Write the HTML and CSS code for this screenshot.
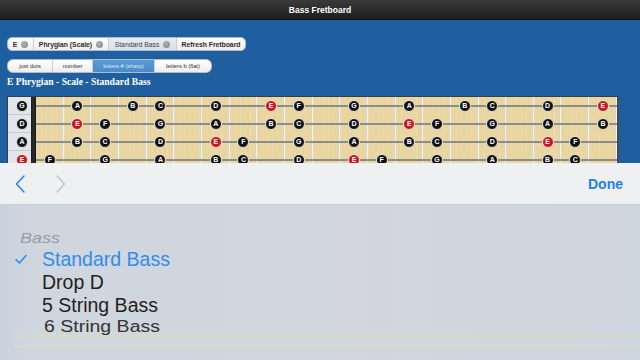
FILE: index.html
```html
<!DOCTYPE html>
<html>
<head>
<meta charset="utf-8">
<link rel="stylesheet" href="styles.css">
</head>
<body>
<header class="topbar">Bass Fretboard</header>
<main class="stage">
  <div class="seg seg-main">
    <span class="seg-item w-e">E<i class="knob"></i></span>
    <span class="seg-item w-ph">Phrygian (Scale)<i class="knob"></i></span>
    <span class="seg-item w-sb on">Standard Bass<i class="knob"></i></span>
    <span class="seg-item w-rf">Refresh Fretboard</span>
  </div>
  <div class="seg seg-mode">
    <span class="seg-item w-jd">just dots</span>
    <span class="seg-item w-nb">number</span>
    <span class="seg-item w-sh on">letters # (sharp)</span>
    <span class="seg-item w-fl">letters b (flat)</span>
  </div>
  <h1 class="title">E Phrygian - Scale - Standard Bass</h1>
  <div class="board">
    <div class="lbl"><b class="n">G</b></div><div class="nut"></div>
    <div class="f"></div><div class="f"><b class="n">A</b></div><div class="f"></div><div class="f"><b class="n">B</b></div><div class="f"><b class="n">C</b></div><div class="f"></div><div class="f"><b class="n">D</b></div><div class="f"></div><div class="f"><b class="n r">E</b></div><div class="f"><b class="n">F</b></div><div class="f"></div><div class="f"><b class="n">G</b></div><div class="f"></div><div class="f"><b class="n">A</b></div><div class="f"></div><div class="f"><b class="n">B</b></div><div class="f"><b class="n">C</b></div><div class="f"></div><div class="f"><b class="n">D</b></div><div class="f"></div><div class="f"><b class="n r">E</b></div>

    <div class="lbl"><b class="n">D</b></div><div class="nut"></div>
    <div class="f"></div><div class="f"><b class="n r">E</b></div><div class="f"><b class="n">F</b></div><div class="f"></div><div class="f"><b class="n">G</b></div><div class="f"></div><div class="f"><b class="n">A</b></div><div class="f"></div><div class="f"><b class="n">B</b></div><div class="f"><b class="n">C</b></div><div class="f"></div><div class="f"><b class="n">D</b></div><div class="f"></div><div class="f"><b class="n r">E</b></div><div class="f"><b class="n">F</b></div><div class="f"></div><div class="f"><b class="n">G</b></div><div class="f"></div><div class="f"><b class="n">A</b></div><div class="f"></div><div class="f"><b class="n">B</b></div>

    <div class="lbl"><b class="n">A</b></div><div class="nut"></div>
    <div class="f"></div><div class="f"><b class="n">B</b></div><div class="f"><b class="n">C</b></div><div class="f"></div><div class="f"><b class="n">D</b></div><div class="f"></div><div class="f"><b class="n r">E</b></div><div class="f"><b class="n">F</b></div><div class="f"></div><div class="f"><b class="n">G</b></div><div class="f"></div><div class="f"><b class="n">A</b></div><div class="f"></div><div class="f"><b class="n">B</b></div><div class="f"><b class="n">C</b></div><div class="f"></div><div class="f"><b class="n">D</b></div><div class="f"></div><div class="f"><b class="n r">E</b></div><div class="f"><b class="n">F</b></div><div class="f"></div>

    <div class="lbl"><b class="n r">E</b></div><div class="nut"></div>
    <div class="f"><b class="n">F</b></div><div class="f"></div><div class="f"><b class="n">G</b></div><div class="f"></div><div class="f"><b class="n">A</b></div><div class="f"></div><div class="f"><b class="n">B</b></div><div class="f"><b class="n">C</b></div><div class="f"></div><div class="f"><b class="n">D</b></div><div class="f"></div><div class="f"><b class="n r">E</b></div><div class="f"><b class="n">F</b></div><div class="f"></div><div class="f"><b class="n">G</b></div><div class="f"></div><div class="f"><b class="n">A</b></div><div class="f"></div><div class="f"><b class="n">B</b></div><div class="f"><b class="n">C</b></div><div class="f"></div>
  </div>
</main>
<section class="toolbar">
  <svg class="chev" width="10" height="18" viewBox="0 0 10 18"><polyline points="9,1 1.5,9 9,17" fill="none" stroke="#1f7ff0" stroke-width="1.4" stroke-linecap="round" stroke-linejoin="round"/></svg>
  <svg class="chev chev-next" width="10" height="18" viewBox="0 0 10 18"><polyline points="1,1 8.5,9 1,17" fill="none" stroke="#c2c5c9" stroke-width="1.4" stroke-linecap="round" stroke-linejoin="round"/></svg>
  <span class="done">Done</span>
</section>
<section class="picker">
  <div class="group">Bass</div>
  <div class="item sel"><svg class="check" width="12" height="10" viewBox="0 0 12 10"><polyline points="1,5.5 4.5,9 11,1.5" fill="none" stroke="#2f8cf0" stroke-width="1.6" stroke-linecap="round" stroke-linejoin="round"/></svg><span>Standard Bass</span></div>
  <div class="item drop">Drop D</div>
  <div class="item five">5 String Bass</div>
  <div class="item six">6 String Bass</div>
  <div class="band"></div>
</section>
</body>
</html>
```
FILE: styles.css
```css
html, body {
  margin: 0;
  padding: 0;
  width: 640px;
  height: 360px;
  overflow: hidden;
  font-family: "Liberation Sans", Arial, sans-serif;
  background: #cfd6df;
}

.topbar {
  height: 20px;
  box-sizing: border-box;
  background: linear-gradient(#3a3a3a, #1d1d1d);
  border-bottom: 1px solid #0e0e0e;
  color: #fff;
  font-weight: bold;
  font-size: 8.5px;
  display: flex;
  align-items: center;
  justify-content: center;
}

.stage {
  height: 143px;
  box-sizing: border-box;
  background: #1f5e9f;
  padding: 17px 0 0 7px;
  overflow: hidden;
}

.seg {
  display: flex;
  width: fit-content;
  height: 14px;
  box-sizing: border-box;
  border: 1px solid #aebccb;
  border-radius: 5px;
  background: linear-gradient(#ffffff, #ededed);
  overflow: hidden;
}

.seg-item {
  display: flex;
  align-items: center;
  justify-content: center;
  gap: 4px;
  border-right: 1px solid #c9cdd2;
  box-sizing: border-box;
  color: #2b2b2b;
  white-space: nowrap;
}
.seg-item:last-child { border-right: 0; }

.seg-main .seg-item { font-weight: bold; font-size: 6.8px; }
.seg-main .on { background: linear-gradient(#e6ecf2, #d7e0ea); color: #3a3f45; font-weight: normal; }

.knob {
  width: 7px;
  height: 7px;
  border-radius: 50%;
  background: radial-gradient(circle at 40% 35%, #b0b0b0, #878787);
}

.w-e { width: 26px; }
.w-ph { width: 75px; }
.w-sb { width: 68px; }
.w-rf { width: 68px; }

.seg-mode { margin-top: 8px; border-radius: 6px; }
.seg-mode .seg-item { font-size: 5.8px; color: #333; }
.seg-mode .on { background: linear-gradient(#5a9ad6, #4a8bcb); color: #dce9f6; }
.w-jd { width: 45px; }
.w-nb { width: 40px; }
.w-sh { width: 62px; }
.w-fl { width: 56px; }

.title {
  margin: 2px 0 0;
  font-family: "Liberation Serif", "Times New Roman", serif;
  font-weight: bold;
  font-size: 9.6px;
  line-height: 14px;
  color: #fff;
}

.board {
  margin-top: 7px;
  width: fit-content;
  display: grid;
  grid-template-columns: 23px 5px repeat(21, 27.67px);
  grid-auto-rows: 18px;
  border: 1px solid #3c3c3c;
  border-right: 2px solid #4a4a4a;
  background: #e8d59f;
}

.lbl {
  background: #e3e6e9;
  border-bottom: 1px solid #c4ccd6;
  box-sizing: border-box;
  display: flex;
  align-items: center;
  padding-left: 8px;
}

.nut {
  background: linear-gradient(to right, #1a1a1a, #2e2e2e 50%, #141414);
}

.f {
  display: flex;
  align-items: center;
  justify-content: center;
  background:
    linear-gradient(to bottom, transparent 8px, #7f7f7f 8px, #9a9a9a 9px, #7d7d7d 10px, transparent 10px),
    linear-gradient(to right, transparent calc(100% - 2px), #b4b4b4 calc(100% - 2px), #f2f2f2 calc(100% - 1px)),
    repeating-linear-gradient(90deg, rgba(255,255,255,0.10) 0 1px, transparent 1px 5px),
    #e8d59f;
}

.n {
  width: 10px;
  height: 10px;
  border-radius: 50%;
  border: 1px solid #e4e4e4;
  background: #101010;
  color: #fff;
  font-size: 7px;
  font-weight: bold;
  line-height: 10px;
  text-align: center;
  display: block;
}
.n.r { background: #c8141b; }

.toolbar {
  height: 42px;
  box-sizing: border-box;
  background: #eef0f2;
  border-bottom: 1px solid #c8ced6;
  display: flex;
  align-items: center;
  padding: 0 17px 0 15px;
}

.chev-next { margin-left: 31px; }

.done {
  margin-left: auto;
  color: #1f7ff0;
  font-weight: bold;
  font-size: 14px;
}

.picker {
  height: 155px;
  box-sizing: border-box;
  padding-top: 23px;
  background: linear-gradient(to right, #c9d3de, #d0d6de 6%, #d2d6dc 60%, #cdd5de);
}

.group {
  padding-left: 20px;
  height: 20px;
  line-height: 20px;
  font-size: 18px;
  font-style: italic;
  color: #989ca2;
  transform: scaleY(0.85);
  transform-origin: left center;
}

.item {
  font-size: 19.5px;
  color: #1f1f1f;
  padding-left: 42px;
  white-space: nowrap;
}

.item.sel {
  display: flex;
  align-items: center;
  padding-left: 15px;
  gap: 15px;
  height: 22px;
  color: #2f8cf0;
}

.drop { height: 24px; line-height: 24px; }
.five { height: 23px; line-height: 23px; }
.six {
  height: 18px;
  line-height: 18px;
  padding-left: 44px;
  color: #333;
  transform: scaleY(0.8);
  transform-origin: left center;
}

.band {
  margin-left: 14px;
  height: 8px;
  border-top: 2px solid #d2dfc7;
  border-bottom: 2px solid #d2dfc7;
}
```
